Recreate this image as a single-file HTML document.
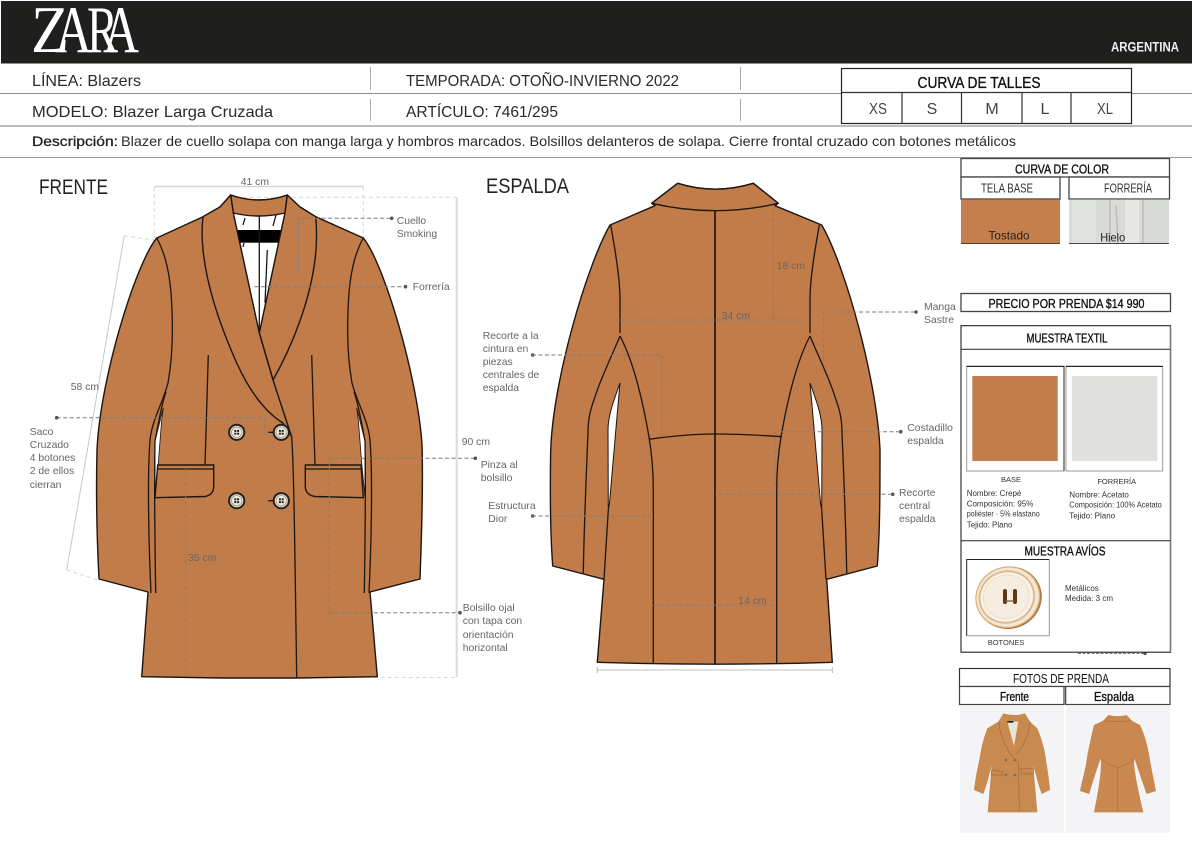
<!DOCTYPE html>
<html lang="es">
<head>
<meta charset="utf-8">
<title>Zara - Ficha técnica</title>
<style>
html,body{margin:0;padding:0;background:#fff;width:1192px;height:843px;overflow:hidden}
svg{display:block;position:absolute;left:0;top:0}
text{font-family:"Liberation Sans",sans-serif}
.h{font-size:16px;fill:#2a2a2a}
.a{font-size:10.4px;fill:#666}
.ti{font-size:13px;fill:#111;stroke:#111;stroke-width:.35;text-anchor:middle}
.sm{font-size:8px;fill:#333}
.d{stroke:#7e7e7e;stroke-width:1;stroke-dasharray:4 2.500;fill:none}
.l{stroke:#d8d8d8;stroke-width:1;stroke-dasharray:4 3;fill:none}
.g{stroke:#d6d6d6;stroke-width:1.500;fill:none}
.s{fill:none;stroke:#1d1510;stroke-width:1.300}
.j{fill:#c17c49;stroke:#1d1510;stroke-width:1.400;stroke-linejoin:round}
</style>
</head>
<body>
<svg width="1192" height="843" viewBox="0 0 1192 843" xmlns="http://www.w3.org/2000/svg">
<defs>
<filter id="soft" x="-5%" y="-5%" width="110%" height="110%"><feGaussianBlur stdDeviation="0.5"/></filter>
<g id="btn">
<circle r="7.600" fill="#e9e1cf" stroke="#222" stroke-width="2"/>
<circle r="5.200" fill="#efe9da" stroke="#8a8270" stroke-width=".6"/>
<rect x="-2.400" y="-2.400" width="2" height="2" fill="#222"/><rect x=".4" y="-2.400" width="2" height="2" fill="#222"/>
<rect x="-2.400" y=".4" width="2" height="2" fill="#222"/><rect x=".4" y=".4" width="2" height="2" fill="#222"/>
</g>
<g id="fl">
<path class="s" d="M156.700 238C166 255 170 275 171.500 300C173 325 173 355 168 383C162 405 152 420 150 440C147 480 149 550 151 593"/>
<path class="s" d="M166 392C162 402 158 425 155 441C154 490 155 550 155.700 593"/>
<path class="s" d="M208.300 355L205 465"/>
</g>
<g id="blines">
<path class="s" d="M608.300 510L604 579.300"/>
<path class="s" d="M610.700 225C616 255 620 280 620 300L620 333"/>
<path class="s" d="M620 336C610 360 600 380 595 397C590 410 588 420 588 433C586 480 584 530 583.300 573"/>
<path class="s" d="M620 336C630 355 640 385 649 437C652 455 653.300 470 653.300 490L653.300 663"/>
</g>
<path id="fsil" d="M230.700 195Q259 205 287.300 195L300 207L315.700 216.700L363.300 238C385 265 418 380 422 445C423.500 490 421 550 420 579L370 592L377.300 676.700L296.500 678L222 678L141.700 676.700L148 592L99 579C97 540 96 490 97 450C100 380 135 265 156.700 238L203 216.700L220 207Z"/>
<path id="bsil" d="M677.700 183.300Q715 195 753.300 183.300L778.300 203.300L775 205.700L821.700 225C845 265 877 380 880 450C880 490 880 530 877.300 566L826.700 579.300L832.300 662.300Q715 666 597.300 662.300L604 579.300L552.700 566C550 530 550 490 550.700 450C553 380 587 265 610 225L655 205.700L651.700 203.300Z"/>
</defs>

<!-- header -->
<rect x="1" y="1" width="1191" height="62.500" fill="#1f1f1d"/>
<g fill="#fff">
<text x="31" y="52" font-size="67" textLength="38" lengthAdjust="spacingAndGlyphs" style="font-family:'Liberation Serif',serif">Z</text>
<text x="55" y="52" font-size="67" textLength="37" lengthAdjust="spacingAndGlyphs" style="font-family:'Liberation Serif',serif">A</text>
<text x="87" y="52" font-size="67" textLength="31" lengthAdjust="spacingAndGlyphs" style="font-family:'Liberation Serif',serif">R</text>
<text x="103" y="52" font-size="67" textLength="36" lengthAdjust="spacingAndGlyphs" style="font-family:'Liberation Serif',serif">A</text>
</g>
<text x="1111" y="51.500" font-size="13.500" font-weight="bold" fill="#eee" textLength="68" lengthAdjust="spacingAndGlyphs">ARGENTINA</text>

<path d="M0 93.500H841M1131 93.500H1192" stroke="#8c8c8c" stroke-width="1"/>
<path d="M0 126H1192" stroke="#bcbcbc" stroke-width="2"/>
<path d="M0 157.500H1192" stroke="#999" stroke-width="1"/>
<path d="M370.500 67V90M370.500 99V121M740.500 67V90M740.500 99V121" stroke="#aaa" stroke-width="1"/>

<text class="h" x="32" y="86" textLength="109" lengthAdjust="spacingAndGlyphs">LÍNEA: Blazers</text>
<text class="h" x="406" y="86" textLength="273" lengthAdjust="spacingAndGlyphs">TEMPORADA: OTOÑO-INVIERNO 2022</text>
<text class="h" x="32" y="117" textLength="241" lengthAdjust="spacingAndGlyphs">MODELO: Blazer Larga Cruzada</text>
<text class="h" x="406" y="117" textLength="152" lengthAdjust="spacingAndGlyphs">ARTÍCULO: 7461/295</text>
<text x="32" y="146" font-size="14" fill="#222" stroke="#222" stroke-width=".3" textLength="86" lengthAdjust="spacingAndGlyphs">Descripción:</text>
<text x="121" y="146" font-size="14" fill="#2a2a2a" textLength="895" lengthAdjust="spacingAndGlyphs">Blazer de cuello solapa con manga larga y hombros marcados. Bolsillos delanteros de solapa. Cierre frontal cruzado con botones metálicos</text>

<!-- curva de talles -->
<rect x="841.500" y="68.500" width="290" height="55" fill="#fff" stroke="#222" stroke-width="1.200"/>
<path d="M841 92.500H1131M902 92.500V124M961.500 92.500V124M1022 92.500V124M1071 92.500V124" stroke="#333" stroke-width="1.200"/>
<text class="ti" x="979" y="88" textLength="123" lengthAdjust="spacingAndGlyphs" style="font-size:16px">CURVA DE TALLES</text>
<g font-size="16" fill="#444" text-anchor="middle">
<text x="878" y="114" textLength="18" lengthAdjust="spacingAndGlyphs">XS</text>
<text x="932" y="114">S</text>
<text x="992" y="114">M</text>
<text x="1045" y="114">L</text>
<text x="1105" y="114" textLength="16" lengthAdjust="spacingAndGlyphs">XL</text>
</g>

<!-- FRENTE -->
<text x="39" y="194" font-size="21" fill="#222" textLength="69" lengthAdjust="spacingAndGlyphs">FRENTE</text>
<path class="g" d="M154.300 186.500H363.300" />
<path class="l" d="M154.300 187V238M363.300 187V238M243 197.300H456M124.300 235.700L154 240M66.700 570L98 580M296.700 677.500H456"/>
<path d="M456.700 197V677" stroke="#dcdcdc" stroke-width="2" fill="none"/>
<path d="M124.300 235.700L66.700 570" stroke="#c8c8c8" stroke-width="1" fill="none"/>
<use href="#fsil" class="j"/>
<path d="M233.300 213H285L259.300 333Z" fill="#fff" stroke="#1d1510" stroke-width="1.200"/>
<path d="M230.700 195Q259 205 287.300 195L285 213Q259 219 233.300 213Z" class="j"/>
<rect x="236.700" y="230" width="45" height="12.700" fill="#000"/>
<path class="s" d="M259.300 216V333M267.300 250L265 303M245 218L243 225M276 215L273 226M244 243L243 247"/>
<path d="M163.300 408L155 441L155 497L158.300 463L161.700 420Z" fill="#ffffff" stroke="#1d1510" stroke-width=".8"/>
<path d="M356.700 408L365 441L365 497L361.700 463L358.300 420Z" fill="#ffffff" stroke="#1d1510" stroke-width=".8"/>
<use href="#fl"/>
<use href="#fl" transform="translate(520,0) scale(-1,1)"/>
<!-- lapels -->
<path class="j" d="M287.300 195L285 213L259.300 333L273 380C290 350 312 300 316 250C317 235 316.500 225 315.700 216.700L300 207Z"/>
<path class="j" d="M230.700 195L233.300 213L259.300 333L273 380L291.700 437C290 432 286 428 283 423C265 412 250 392 236.700 363C222 330 207 290 203 250C201.500 235 202 225 203 216.700L220 207Z"/>
<path class="s" d="M291.700 437C294 470 295 560 296.700 678"/>
<!-- pockets -->
<path class="j" d="M157.700 465H213.700V486Q213.700 495 205 496.500L155 497.700Z"/>
<path class="s" d="M157 469H213.700"/>
<path class="j" d="M305.300 465H361L363.300 497.700L315 496.500Q305.300 495 305.300 486Z"/>
<path class="s" d="M305.300 469H361.500"/>
<use href="#btn" x="236.700" y="432.300"/>
<use href="#btn" x="281.300" y="432.300"/>
<use href="#btn" x="236.700" y="500.700"/>
<use href="#btn" x="281.300" y="500.700"/>
<path class="s" d="M268.300 432.300H273.300M268.300 500.700H273.300"/>

<!-- front callouts -->
<path class="d" d="M298.300 273V218.300H391"/>
<path class="d" d="M254.300 286.700H405"/>
<path class="d" d="M56.700 417.700H265V433"/>
<path class="d" d="M475 458.300H329.300V612.700H460"/>
<path class="d" d="M185.700 469V676.700"/>
<g fill="#555">
<circle cx="391.700" cy="218.300" r="1.800"/><circle cx="405.500" cy="286.700" r="1.800"/><circle cx="56.700" cy="417.700" r="1.800"/><circle cx="475.300" cy="458.300" r="1.800"/><circle cx="460" cy="612.700" r="1.800"/>
<circle cx="532.700" cy="516" r="1.800"/><circle cx="532.700" cy="355" r="1.800"/><circle cx="916" cy="312" r="1.800"/><circle cx="900.700" cy="431.700" r="1.800"/><circle cx="892.700" cy="494.300" r="1.800"/><circle cx="1145" cy="653.300" r="1.800"/>
</g>
<text class="a" x="240.700" y="185">41 cm</text>
<text class="a" x="461.700" y="445">90 cm</text>
<text class="a" x="70.700" y="390">58 cm</text>
<text class="a" x="188" y="561">35 cm</text>
<text class="a" x="396.700" y="224">Cuello</text>
<text class="a" x="396.700" y="237">Smoking</text>
<text class="a" x="412.700" y="290">Forrería</text>
<text class="a" x="29.700" y="435">Saco</text>
<text class="a" x="29.700" y="448">Cruzado</text>
<text class="a" x="29.700" y="461">4 botones</text>
<text class="a" x="29.700" y="474">2 de ellos</text>
<text class="a" x="29.700" y="488">cierran</text>
<text class="a" x="480.700" y="468">Pinza al</text>
<text class="a" x="480.700" y="481">bolsillo</text>
<text class="a" x="462.700" y="611">Bolsillo ojal</text>
<text class="a" x="462.700" y="624">con tapa con</text>
<text class="a" x="462.700" y="638">orientación</text>
<text class="a" x="462.700" y="651">horizontal</text>
<text class="a" x="488.300" y="509">Estructura</text>
<text class="a" x="488.300" y="522">Dior</text>

<!-- ESPALDA -->
<text x="486" y="193" font-size="21" fill="#222" textLength="83" lengthAdjust="spacingAndGlyphs">ESPALDA</text>
<use href="#bsil" class="j"/>
<path d="M620 383C614 400 608 415 608 430L608.300 510L609.500 503L616.700 420Z" fill="#ffffff" stroke="#1d1510" stroke-width="1"/>
<path d="M810 383C816 400 822 415 822 430L821.700 510L820.500 503L813.300 420Z" fill="#ffffff" stroke="#1d1510" stroke-width="1"/>
<use href="#blines"/>
<use href="#blines" transform="translate(1430,0) scale(-1,1)"/>
<path class="j" d="M677.700 183.300Q715 195 753.300 183.300L778.300 203.300Q715 218 651.700 203.300Z"/>
<path d="M715 211V664" stroke="#2a1a10" stroke-width="1.800"/>
<path class="s" d="M649 439.300Q685 434 715 434T781.700 436.700"/>
<path class="g" d="M597.300 670H832.300"/>
<path d="M597.300 667V673M832.300 667V673" stroke="#bbb" stroke-width="1"/>
<path class="d" d="M773.300 205V320M620 320H810"/>
<path class="d" d="M915 312H823.300V363"/>
<path class="d" d="M532 355H661.700V436.700"/>
<path class="d" d="M900 431.700H775V487"/>
<path class="d" d="M892 494.300H715.300"/>
<path class="d" d="M532 516H653.300"/>
<path class="d" d="M653.300 605.300H776.700"/>
<text class="a" x="776.700" y="269">18 cm</text>
<text class="a" x="721.700" y="319">34 cm</text>
<text class="a" x="738.300" y="604">14 cm</text>
<text class="a" x="924" y="310">Manga</text>
<text class="a" x="924" y="323">Sastre</text>
<text class="a" x="482.700" y="339">Recorte a la</text>
<text class="a" x="482.700" y="352">cintura en</text>
<text class="a" x="482.700" y="365">piezas</text>
<text class="a" x="482.700" y="378">centrales de</text>
<text class="a" x="482.700" y="391">espalda</text>
<text class="a" x="907.300" y="431">Costadillo</text>
<text class="a" x="907.300" y="444">espalda</text>
<text class="a" x="899" y="496">Recorte</text>
<text class="a" x="899" y="509">central</text>
<text class="a" x="899" y="522">espalda</text>

<!-- curva de color -->
<rect x="961" y="158.500" width="208.500" height="18.500" fill="#fff" stroke="#444" stroke-width="1.300"/>
<rect x="961" y="177" width="99" height="22" fill="#fff" stroke="#444" stroke-width="1.300"/>
<rect x="1069" y="177" width="100.500" height="22" fill="#fff" stroke="#444" stroke-width="1.300"/>
<text class="ti" x="1062" y="173.500" textLength="94" lengthAdjust="spacingAndGlyphs">CURVA DE COLOR</text>
<text x="981" y="192.500" font-size="12.500" fill="#333" textLength="52" lengthAdjust="spacingAndGlyphs">TELA BASE</text>
<text x="1104" y="192.500" font-size="12.500" fill="#333" textLength="48" lengthAdjust="spacingAndGlyphs">FORRERÍA</text>
<rect x="961" y="199.500" width="99" height="44" fill="#c67f4c"/>
<rect x="1069" y="199.500" width="100" height="44" fill="#d8dad5"/>
<rect x="1125" y="200" width="14" height="43" fill="#e6e7e3"/>
<rect x="1072" y="200" width="24" height="43" fill="#e0e2dd"/>
<path d="M1110 200V243M1116 205L1118 243M1143 200V243" stroke="#bdbcb6" stroke-width="1.500" fill="none"/>
<path d="M961 243.500H1060M1069 243.500H1169" stroke="#444" stroke-width="1"/>
<text x="1009" y="239.500" font-size="12" fill="#222" text-anchor="middle" textLength="41" lengthAdjust="spacingAndGlyphs">Tostado</text>
<text x="1112.700" y="241.500" font-size="12" fill="#222" text-anchor="middle" textLength="25" lengthAdjust="spacingAndGlyphs">Hielo</text>

<!-- precio -->
<rect x="961" y="293.500" width="209.500" height="18" fill="#fff" stroke="#444" stroke-width="1.300"/>
<text class="ti" x="1066.500" y="308" textLength="156" lengthAdjust="spacingAndGlyphs">PRECIO POR PRENDA $14 990</text>

<!-- muestra textil -->
<rect x="961" y="325.700" width="209.500" height="326.500" fill="#fff" stroke="#222" stroke-width="1.100"/>
<path d="M1170.500 326V652" stroke="#777" stroke-width="1.500"/>
<path d="M961 349.300H1170M961 540.700H1170" stroke="#222" stroke-width="1"/>
<text class="ti" x="1067" y="342.500" textLength="81" lengthAdjust="spacingAndGlyphs">MUESTRA TEXTIL</text>
<path d="M966.700 471V366H1064V471Z" fill="none" stroke="#999" stroke-width="1"/>
<path d="M966.700 366.500H1064V471" fill="none" stroke="#222" stroke-width="1"/>
<path d="M1066 471V366H1162.700V471Z" fill="none" stroke="#999" stroke-width="1"/>
<path d="M1066 366.500H1162.700" fill="none" stroke="#222" stroke-width="1"/>
<rect x="972.300" y="376" width="85.400" height="85" fill="#c47e4b"/>
<rect x="1071.700" y="376" width="85.600" height="85" fill="#e0e1dd"/>
<text class="sm" x="1011" y="482" text-anchor="middle" style="font-size:7.500px">BASE</text>
<text class="sm" x="1116.700" y="484" text-anchor="middle" style="font-size:7.500px">FORRERÍA</text>
<text class="sm" x="966.700" y="496">Nombre: Crepé</text>
<text class="sm" x="966.700" y="506.500">Composición: 95%</text>
<text class="sm" x="966.700" y="516.500" textLength="73" lengthAdjust="spacingAndGlyphs">poliéster · 5% elastano</text>
<text class="sm" x="966.700" y="527.500">Tejido: Plano</text>
<text class="sm" x="1069.300" y="497.500">Nombre: Acetato</text>
<text class="sm" x="1069.300" y="507.500" textLength="92.500" lengthAdjust="spacingAndGlyphs">Composición: 100% Acetato</text>
<text class="sm" x="1069.300" y="518.500">Tejido: Plano</text>

<!-- avios -->
<text class="ti" x="1065" y="555.500" textLength="81" lengthAdjust="spacingAndGlyphs">MUESTRA AVÍOS</text>
<path d="M966.700 636V559.500H1049.300" fill="none" stroke="#222" stroke-width="1"/>
<path d="M966.700 635.700H1049.300V559.500" fill="none" stroke="#999" stroke-width="1"/>
<g transform="rotate(-20 1008.300 597.300)">
<ellipse cx="1008.800" cy="598" rx="33" ry="31" fill="#a9793f"/>
<ellipse cx="1007.800" cy="597" rx="32" ry="30" fill="#f4e6d2" stroke="#d9ad7c" stroke-width="1.200"/>
<ellipse cx="1007" cy="596.500" rx="27.500" ry="25.500" fill="#f8f2e6" stroke="#dcb88e" stroke-width="1.800"/>
<ellipse cx="1006.500" cy="596" rx="23" ry="21.500" fill="#f5eee0" stroke="#ece0c9" stroke-width="1"/>
</g>
<path d="M1005 591V602M1015 591V602" stroke="#5a3a18" stroke-width="4" stroke-linecap="round" fill="none"/>
<path d="M1005 601H1015" stroke="#7a5630" stroke-width="1.200" fill="none"/>
<text class="sm" x="1006" y="645" text-anchor="middle" style="font-size:7.500px">BOTONES</text>
<text class="sm" x="1065" y="591">Metálicos</text>
<text class="sm" x="1065" y="601">Medida: 3 cm</text>
<path d="M1078 653.300H1145" stroke="#555" stroke-width="1" stroke-dasharray="3 1.500"/>

<!-- fotos -->
<rect x="959.500" y="668.500" width="210.500" height="18" fill="#fff" stroke="#333" stroke-width="1.200"/>
<rect x="959.500" y="686.500" width="104.500" height="18" fill="#fff" stroke="#444" stroke-width="1.200"/>
<rect x="1065.700" y="686.500" width="104.300" height="18" fill="#fff" stroke="#444" stroke-width="1.200"/>
<text x="1061" y="683" font-size="13" fill="#111" text-anchor="middle" textLength="96" lengthAdjust="spacingAndGlyphs">FOTOS DE PRENDA</text>
<text class="ti" x="1014.500" y="701" style="font-size:12.500px" textLength="29" lengthAdjust="spacingAndGlyphs">Frente</text>
<text class="ti" x="1114" y="701" style="font-size:12.500px" textLength="40" lengthAdjust="spacingAndGlyphs">Espalda</text>
<rect x="960" y="706" width="104" height="127" fill="#f4f4f6"/>
<rect x="1066" y="706" width="104" height="127" fill="#f4f4f6"/>

<g transform="translate(950,660) scale(.3333)" filter="url(#soft)">
<!-- front photo -->
<path d="M160 160Q192 170 225 160L240 185L262 205C275 235 285 270 288 300C294 335 298 365 300 390L275 402C265 375 258 345 250 318L262 457H113L125 318C118 345 110 375 100 402L72 390C75 365 80 335 88 300C92 270 100 235 112 205L145 185Z" fill="#c98a4f"/>
<path d="M172 185H205L192 258Z" fill="#e9e6d8"/>
<rect x="172" y="183" width="18" height="5" fill="#222"/>
<path d="M146 185C150 230 175 280 200 305M240 185C240 225 215 265 198 285M205 305L208 455M125 330L158 335V345H123ZM212 325H250V342H215Z" fill="none" stroke="#a76a35" stroke-width="2"/>
<g fill="#77705f"><circle cx="168" cy="300" r="4"/><circle cx="195" cy="300" r="4"/><circle cx="168" cy="345" r="4"/><circle cx="195" cy="345" r="4"/></g>
<!-- back photo -->
<path d="M475 165Q503 172 530 165L545 182L570 195C585 225 595 265 600 300C606 335 613 365 618 393L590 402C580 375 565 330 553 295C550 320 560 370 580 457H432C450 370 455 320 452 295C440 330 425 375 418 402L390 393C395 365 405 335 410 300C415 265 425 225 432 195L460 182Z" fill="#c88850"/>
<path d="M460 182Q503 188 545 182M452 295C470 310 490 320 503 322C520 320 540 308 553 295M503 322V455" fill="none" stroke="#ab6f3a" stroke-width="1.800"/>
</g>
</svg>
</body>
</html>
